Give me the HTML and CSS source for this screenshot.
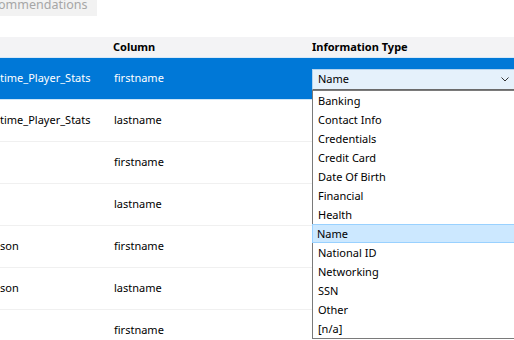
FILE: index.html
```html
<!DOCTYPE html>
<html>
<head>
<meta charset="utf-8">
<link rel="stylesheet" href="styles.css">
</head>
<body>
<div class="view">
  <div class="toolbar">
    <div class="tab">ommendations</div>
  </div>
  <div class="grid">
    <div class="row head">
      <div class="c1"></div>
      <div class="c2">Column</div>
      <div class="c3">Information Type</div>
    </div>
    <div class="row sel">
      <div class="c1">time_Player_Stats</div>
      <div class="c2">firstname</div>
      <div class="c3">
        <div class="combo">
          <span>Name</span>
          <svg class="chev" width="8" height="5" viewBox="0 0 8 5"><path d="M0.5 0.5 L4 4 L7.5 0.5" fill="none" stroke="#333" stroke-width="1"/></svg>
        </div>
      </div>
    </div>
    <div class="row">
      <div class="c1">time_Player_Stats</div>
      <div class="c2">lastname</div>
      <div class="c3"></div>
    </div>
    <div class="row">
      <div class="c1"></div>
      <div class="c2">firstname</div>
      <div class="c3"></div>
    </div>
    <div class="row">
      <div class="c1"></div>
      <div class="c2">lastname</div>
      <div class="c3"></div>
    </div>
    <div class="row">
      <div class="c1">son</div>
      <div class="c2">firstname</div>
      <div class="c3"></div>
    </div>
    <div class="row">
      <div class="c1">son</div>
      <div class="c2">lastname</div>
      <div class="c3"></div>
    </div>
    <div class="row">
      <div class="c1"></div>
      <div class="c2">firstname</div>
      <div class="c3"></div>
    </div>
  </div>
  <ul class="list">
    <li>Banking</li>
    <li>Contact Info</li>
    <li>Credentials</li>
    <li>Credit Card</li>
    <li>Date Of Birth</li>
    <li>Financial</li>
    <li>Health</li>
    <li class="hl">Name</li>
    <li>National ID</li>
    <li>Networking</li>
    <li>SSN</li>
    <li>Other</li>
    <li>[n/a]</li>
  </ul>
</div>
</body>
</html>
```

FILE: styles.css
```css
html, body {
  margin: 0;
  padding: 0;
  background: #ffffff;
}
body {
  width: 514px;
  height: 340px;
  overflow: hidden;
  font-family: "Noto Sans", "Open Sans", sans-serif;
  font-size: 11px;
  color: #000;
}
.view {
  position: relative;
  width: 514px;
  height: 340px;
  overflow: hidden;
}
.toolbar {
  height: 37px;
}
.tab {
  width: 97px;
  height: 16px;
  background: #f2f2f2;
  color: #a6a6a6;
  font-size: 12.5px;
  line-height: 9px;
  letter-spacing: 0;
  text-indent: -2px;
  overflow: hidden;
  white-space: nowrap;
}
.grid {
  display: flex;
  flex-direction: column;
}
.row {
  display: grid;
  grid-template-columns: 113px 199px 202px;
  height: 42px;
  align-items: center;
  border-bottom: 1px solid #f0f0f0;
  box-sizing: border-box;
  line-height: 16px;
}
.row > div {
  white-space: nowrap;
  overflow: hidden;
  padding-bottom: 2px;
}
.row .c2 { padding-left: 1px; }
.row.head {
  height: 21px;
  background: #f3f3f5;
  font-weight: bold;
  border-bottom: 1px solid #d6e8f8;
}
.row.head > div { padding-bottom: 1px; }
.row.head .c2 { padding-left: 0; }
.row.sel {
  background: #0078d7;
  color: #fff;
  border-bottom: 1px solid #cde6f7;
}
.row.sel .c3 { padding-bottom: 0; overflow: visible; }
.combo {
  height: 21px;
  width: 204px;
  box-sizing: border-box;
  background: #e5f1fb;
  border: 1px solid #b4d3ee;
  border-bottom: 1px solid #6b6b6b;
  color: #000;
  display: flex;
  align-items: center;
  padding-left: 5px;
  margin-top: 1px;
}
.combo span { flex: 1; }
.chev { margin-right: 6px; margin-top: 1px; }
.list {
  position: absolute;
  left: 312px;
  top: 90px;
  width: 210px;
  margin: 0;
  padding: 0;
  list-style: none;
  background: #fff;
  border: 1px solid #7a7a7a;
  box-sizing: border-box;
  height: 249px;
}
.list li {
  height: 19px;
  line-height: 19px;
  padding-left: 5px;
  box-sizing: border-box;
}
.list li.hl {
  background: #cce8ff;
  border: 1px solid #99d1ff;
  border-right: none;
  line-height: 17px;
  padding-left: 4px;
  margin-left: -1px;
}
```
